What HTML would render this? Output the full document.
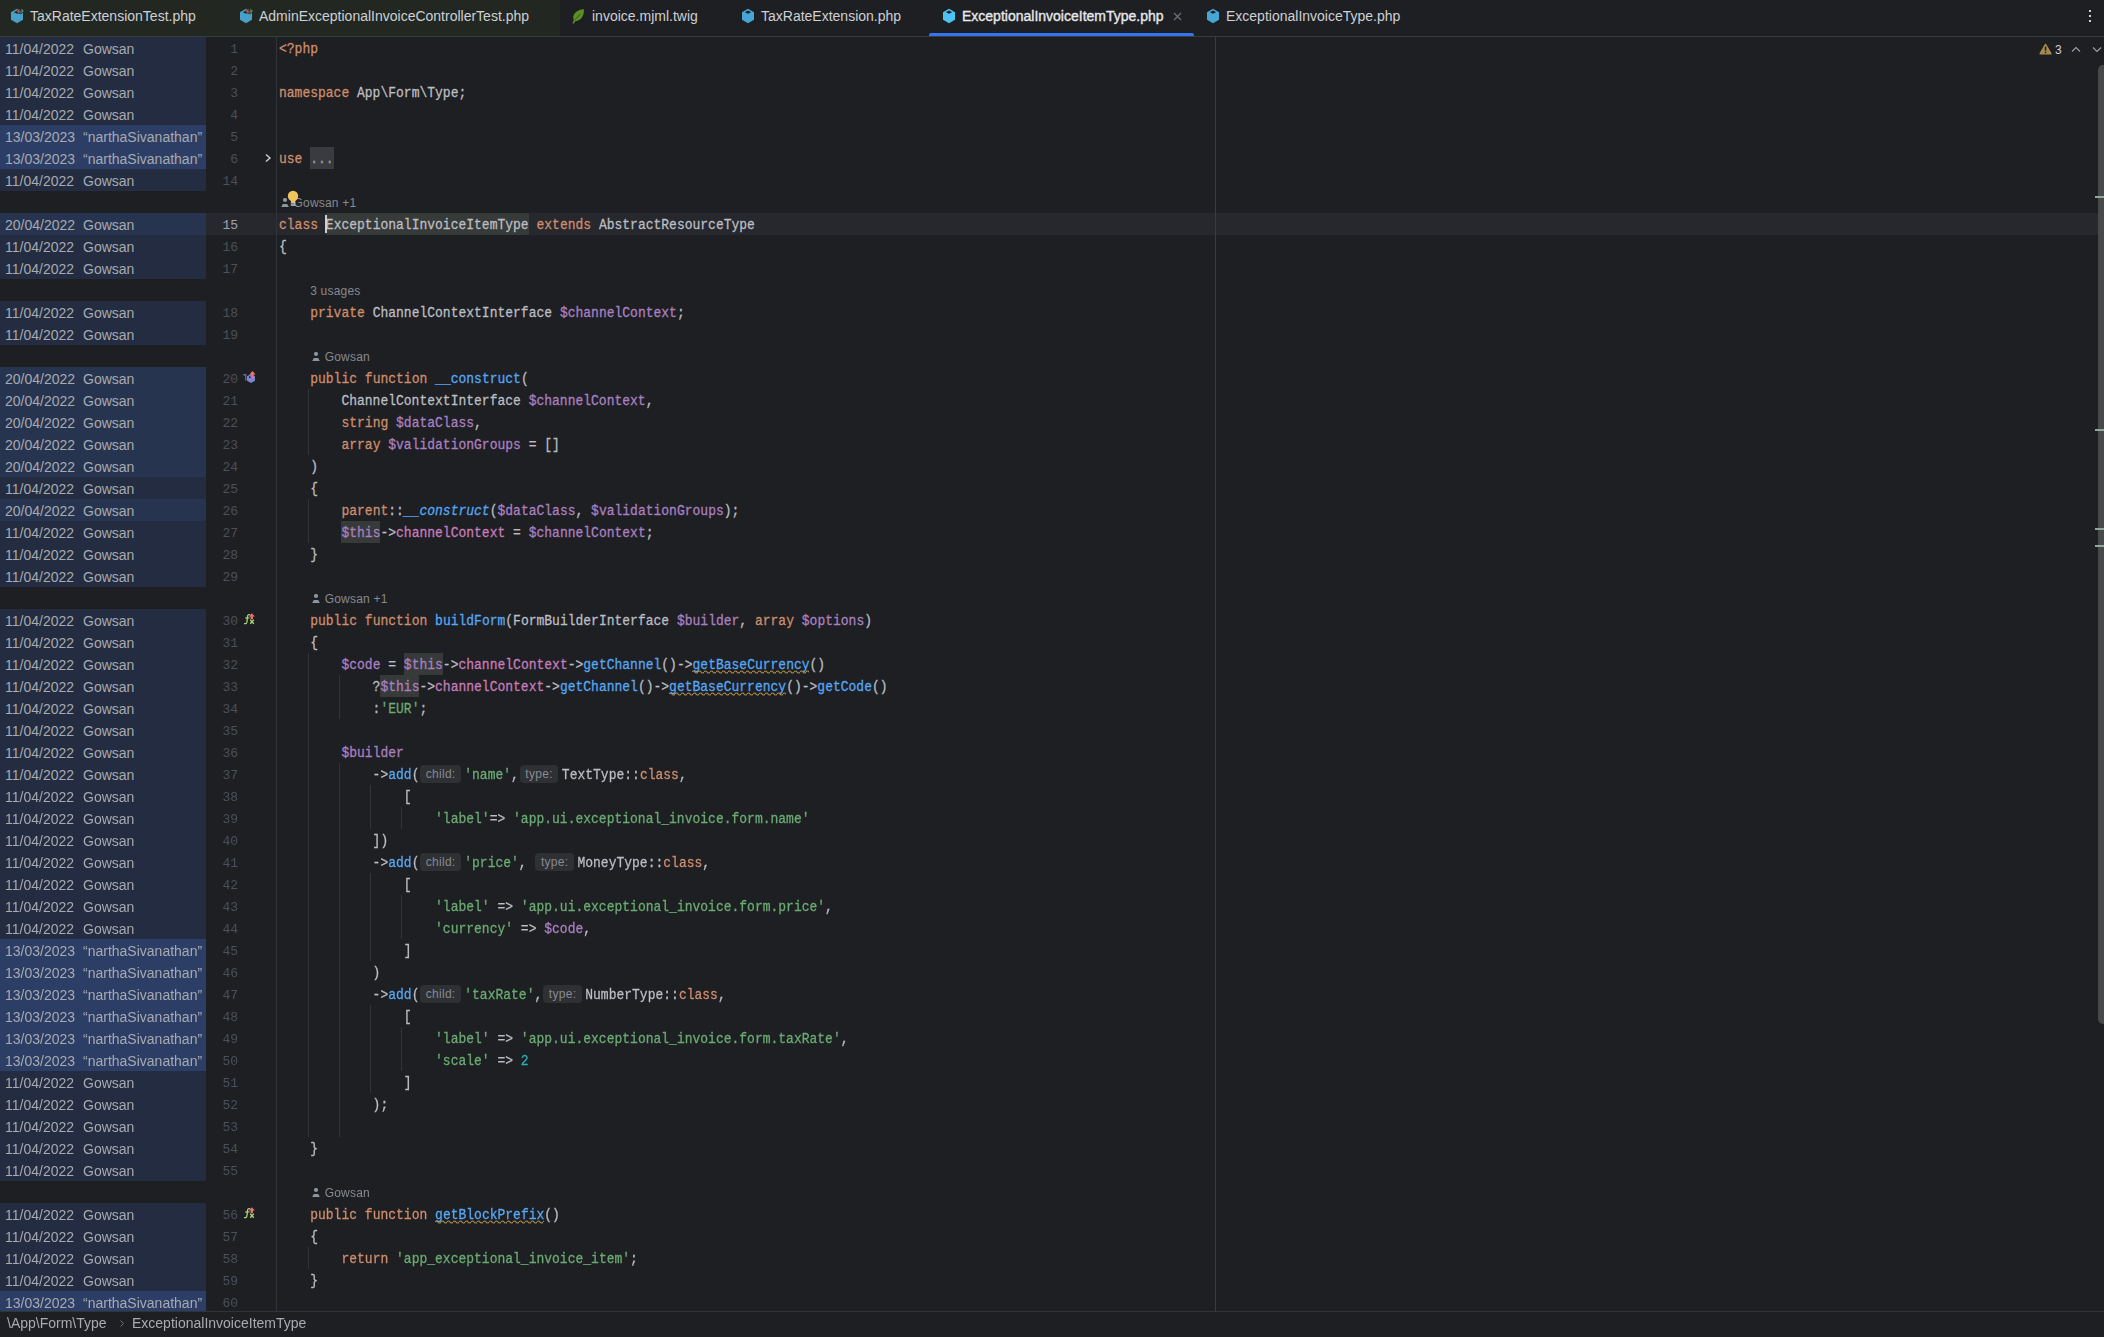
<!DOCTYPE html><html><head><meta charset="utf-8"><style>
*{margin:0;padding:0;box-sizing:border-box}
html,body{width:2104px;height:1337px;overflow:hidden;background:#1e1f22}
body{position:relative;font-family:"Liberation Sans",sans-serif}
.a{position:absolute}
.tabs{position:absolute;left:0;top:0;width:2104px;height:37px;border-bottom:1px solid #393b40;background:#1e1f22}
.tab{position:absolute;top:0;height:36px;line-height:32px;font-size:14px;color:#cdd0d6;white-space:nowrap}
.row{position:absolute;left:0;width:2104px;height:22px}
.bl{position:absolute;left:0;top:0;width:206px;height:22px;font-size:14px;line-height:23px;color:#a7aab0;white-space:nowrap}
.bl .d{position:absolute;left:5px;top:0.5px}
.bl .nm{position:absolute;left:83px;top:0.5px}
.lnum{position:absolute;left:200px;width:38px;top:0;height:22px;text-align:right;font-family:"Liberation Mono",monospace;font-size:13px;line-height:22px;padding-top:2px;color:#4b5059}
.code{position:absolute;left:279px;top:2px;height:22px;transform:scaleY(1.1);transform-origin:0 14px;-webkit-text-stroke:0.25px currentColor;font-family:"Liberation Mono",monospace;font-size:13px;line-height:22px;color:#bcbec4;white-space:pre}
.k{color:#cf8e6d} .v{color:#ab80c2} .fld{color:#c77dbb} .f{color:#56a8f5} .s{color:#6aab73} .n{color:#2aacb8}
.fi{color:#56a8f5;font-style:italic}
.fw{color:#56a8f5}
.uc{}
.vuc{color:#ab80c2}
.fold{color:#9a9da3}
.caretc{display:inline-block;width:2px;height:18px;background:#ced0d6;vertical-align:top;margin-top:0px;margin-left:-1px;margin-right:-1px;position:relative;z-index:2}
.hint{display:inline-block;text-align:center;font-family:"Liberation Sans",sans-serif;font-size:12px;letter-spacing:.3px;line-height:18px;height:18px;padding:0;margin:0 3.5px 0 1px;border-radius:4px;background:#2e3033;color:#868a91;vertical-align:1px;transform:translateY(0.5px) scaleY(0.91);-webkit-text-stroke:0}
.cv{position:absolute;top:0;height:22px;font-size:12px;letter-spacing:.2px;line-height:24px;color:#868a91;white-space:nowrap}
.guide{position:absolute;width:1px;background:#313438}
</style></head><body>
<div class="tabs"></div>
<div class="a" style="left:0;top:0;width:560px;height:36px;background:#222821"></div>
<svg class="a" style="left:10px;top:8px" width="15" height="16" viewBox="0 0 15 16"><path d="M7 0.8 L13 4.3 L13 11.7 L7 15.2 L1 11.7 L1 4.3 Z" fill="#46a0c9"/><path d="M3.9 4.2 L7 2.6 L10.1 4.2 L7 5.8 Z" fill="#222821"/><path d="M9.6 0 L10.2 6 L6.4 3.7 Z" fill="#d9534f" stroke="#222821" stroke-width="0.7" stroke-linejoin="round"/><path d="M11 0 L14.3 2.9 L11.1 6 Z" fill="#4f9a5a" stroke="#222821" stroke-width="0.7" stroke-linejoin="round"/></svg>
<div class="tab" style="left:30px">TaxRateExtensionTest.php</div>
<svg class="a" style="left:239px;top:8px" width="15" height="16" viewBox="0 0 15 16"><path d="M7 0.8 L13 4.3 L13 11.7 L7 15.2 L1 11.7 L1 4.3 Z" fill="#46a0c9"/><path d="M3.9 4.2 L7 2.6 L10.1 4.2 L7 5.8 Z" fill="#222821"/><path d="M9.6 0 L10.2 6 L6.4 3.7 Z" fill="#d9534f" stroke="#222821" stroke-width="0.7" stroke-linejoin="round"/><path d="M11 0 L14.3 2.9 L11.1 6 Z" fill="#4f9a5a" stroke="#222821" stroke-width="0.7" stroke-linejoin="round"/></svg>
<div class="tab" style="left:259px">AdminExceptionalInvoiceControllerTest.php</div>
<svg class="a" style="left:571px;top:8px" width="14" height="16" viewBox="0 0 14 16"><path d="M12.8 1 C13.6 7.8 9.6 13.2 3.4 13.2 C0.6 9.6 2.4 2.2 12.8 1 Z" fill="#5a8f24"/><path d="M2.4 14.8 L3.6 12.4" stroke="#5a8f24" stroke-width="1.6" stroke-linecap="round"/><path d="M3.8 12 L9.4 5.8" stroke="#2e4422" stroke-width="0.8"/></svg>
<div class="tab" style="left:592px">invoice.mjml.twig</div>
<svg class="a" style="left:741px;top:8px" width="15" height="16" viewBox="0 0 15 16"><path d="M7 0.8 L13 4.3 L13 11.7 L7 15.2 L1 11.7 L1 4.3 Z" fill="#46a7d6"/><path d="M3.9 4.2 L7 2.6 L10.1 4.2 L7 5.8 Z" fill="#1e1f22"/></svg>
<div class="tab" style="left:761px">TaxRateExtension.php</div>
<svg class="a" style="left:942px;top:8px" width="15" height="16" viewBox="0 0 15 16"><path d="M7 0.8 L13 4.3 L13 11.7 L7 15.2 L1 11.7 L1 4.3 Z" fill="#4cc3f5"/><path d="M3.9 4.2 L7 2.6 L10.1 4.2 L7 5.8 Z" fill="#1e1f22"/></svg>
<div class="tab" style="left:962px;color:#e6e8ec;-webkit-text-stroke:0.35px #e6e8ec">ExceptionalInvoiceItemType.php</div>
<svg class="a" style="left:1206px;top:8px" width="15" height="16" viewBox="0 0 15 16"><path d="M7 0.8 L13 4.3 L13 11.7 L7 15.2 L1 11.7 L1 4.3 Z" fill="#46a7d6"/><path d="M3.9 4.2 L7 2.6 L10.1 4.2 L7 5.8 Z" fill="#1e1f22"/></svg>
<div class="tab" style="left:1226px">ExceptionalInvoiceType.php</div>
<svg class="a" style="left:1173px;top:12px" width="9" height="9" viewBox="0 0 9 9"><path d="M1 1L8 8M8 1L1 8" stroke="#6f737a" stroke-width="1.1"/></svg>
<div class="a" style="left:929px;top:33px;width:265px;height:3px;background:#3574f0;border-radius:2px 2px 0 0"></div>
<div class="a" style="left:2089px;top:10px;width:2px;height:2px;background:#ced0d6"></div>
<div class="a" style="left:2089px;top:15px;width:2px;height:2px;background:#ced0d6"></div>
<div class="a" style="left:2089px;top:20px;width:2px;height:2px;background:#ced0d6"></div>
<div class="row" style="top:37px;">
<div class="bl" style="background:#232c40"><span class="d">11/04/2022</span><span class="nm">Gowsan</span></div>
<div class="lnum" style="">1</div>
<div class="code"><span class="k">&lt;?php</span></div>
</div>
<div class="row" style="top:59px;">
<div class="bl" style="background:#232c40"><span class="d">11/04/2022</span><span class="nm">Gowsan</span></div>
<div class="lnum" style="">2</div>
<div class="code"></div>
</div>
<div class="row" style="top:81px;">
<div class="bl" style="background:#232c40"><span class="d">11/04/2022</span><span class="nm">Gowsan</span></div>
<div class="lnum" style="">3</div>
<div class="code"><span class="k">namespace</span> App\Form\Type;</div>
</div>
<div class="row" style="top:103px;">
<div class="bl" style="background:#232c40"><span class="d">11/04/2022</span><span class="nm">Gowsan</span></div>
<div class="lnum" style="">4</div>
<div class="code"></div>
</div>
<div class="row" style="top:125px;">
<div class="bl" style="background:#2c3e65"><span class="d">13/03/2023</span><span class="nm">“narthaSivanathan”</span></div>
<div class="lnum" style="">5</div>
<div class="code"></div>
</div>
<div class="row" style="top:147px;">
<div class="bl" style="background:#2c3e65"><span class="d">13/03/2023</span><span class="nm">“narthaSivanathan”</span></div>
<div class="lnum" style="">6</div>
<div class="a" style="left:310.2px;top:0;width:23.4px;height:22px;background:#393b40"></div>
<div class="code"><span class="k">use</span> <span class="fold">...</span></div>
</div>
<div class="row" style="top:169px;">
<div class="bl" style="background:#232c40"><span class="d">11/04/2022</span><span class="nm">Gowsan</span></div>
<div class="lnum" style="">14</div>
<div class="code"></div>
</div>
<div class="row" style="top:191px">
<svg class="a" style="left:281.0px;top:7px" width="9" height="9" viewBox="0 0 9 9"><circle cx="4" cy="2" r="2.1" fill="#8a96a0"/><path d="M0.2 8.9 L1.8 6 L6.2 6 L7.8 8.9 Z" fill="#8a96a0"/></svg>
<div class="cv" style="left:293.5px">Gowsan +1</div>
</div>
<div class="row" style="top:213px;background:#26282e;">
<div class="bl" style="background:#27344f"><span class="d">20/04/2022</span><span class="nm">Gowsan</span></div>
<div class="lnum" style="color:#a1a3ab">15</div>
<div class="a" style="left:324.8px;top:2px;width:2px;height:18px;background:#ced0d6;z-index:3"></div>
<div class="a" style="left:325.8px;top:0;width:202.8px;height:22px;background:#363a38"></div>
<div class="code"><span class="k">class</span> <span class="uc">ExceptionalInvoiceItemType</span> <span class="k">extends</span> AbstractResourceType</div>
</div>
<div class="row" style="top:235px;">
<div class="bl" style="background:#232c40"><span class="d">11/04/2022</span><span class="nm">Gowsan</span></div>
<div class="lnum" style="">16</div>
<div class="code">{</div>
</div>
<div class="row" style="top:257px;">
<div class="bl" style="background:#232c40"><span class="d">11/04/2022</span><span class="nm">Gowsan</span></div>
<div class="lnum" style="">17</div>
<div class="code"></div>
</div>
<div class="row" style="top:279px">
<div class="cv" style="left:310.2px">3 usages</div>
</div>
<div class="row" style="top:301px;">
<div class="bl" style="background:#232c40"><span class="d">11/04/2022</span><span class="nm">Gowsan</span></div>
<div class="lnum" style="">18</div>
<div class="code">    <span class="k">private</span> ChannelContextInterface <span class="v">$channelContext</span>;</div>
</div>
<div class="row" style="top:323px;">
<div class="bl" style="background:#232c40"><span class="d">11/04/2022</span><span class="nm">Gowsan</span></div>
<div class="lnum" style="">19</div>
<div class="code"></div>
</div>
<div class="row" style="top:345px">
<svg class="a" style="left:312.2px;top:7px" width="9" height="9" viewBox="0 0 9 9"><circle cx="4" cy="2" r="2.1" fill="#8a96a0"/><path d="M0.2 8.9 L1.8 6 L6.2 6 L7.8 8.9 Z" fill="#8a96a0"/></svg>
<div class="cv" style="left:324.7px">Gowsan</div>
</div>
<div class="row" style="top:367px;">
<div class="bl" style="background:#27344f"><span class="d">20/04/2022</span><span class="nm">Gowsan</span></div>
<div class="lnum" style="">20</div>
<div class="code">    <span class="k">public</span> <span class="k">function</span> <span class="f">__construct</span>(</div>
</div>
<div class="row" style="top:389px;">
<div class="bl" style="background:#27344f"><span class="d">20/04/2022</span><span class="nm">Gowsan</span></div>
<div class="lnum" style="">21</div>
<div class="code">        ChannelContextInterface <span class="v">$channelContext</span>,</div>
</div>
<div class="row" style="top:411px;">
<div class="bl" style="background:#27344f"><span class="d">20/04/2022</span><span class="nm">Gowsan</span></div>
<div class="lnum" style="">22</div>
<div class="code">        <span class="k">string</span> <span class="v">$dataClass</span>,</div>
</div>
<div class="row" style="top:433px;">
<div class="bl" style="background:#27344f"><span class="d">20/04/2022</span><span class="nm">Gowsan</span></div>
<div class="lnum" style="">23</div>
<div class="code">        <span class="k">array</span> <span class="v">$validationGroups</span> = []</div>
</div>
<div class="row" style="top:455px;">
<div class="bl" style="background:#27344f"><span class="d">20/04/2022</span><span class="nm">Gowsan</span></div>
<div class="lnum" style="">24</div>
<div class="code">    )</div>
</div>
<div class="row" style="top:477px;">
<div class="bl" style="background:#232c40"><span class="d">11/04/2022</span><span class="nm">Gowsan</span></div>
<div class="lnum" style="">25</div>
<div class="code">    {</div>
</div>
<div class="row" style="top:499px;">
<div class="bl" style="background:#27344f"><span class="d">20/04/2022</span><span class="nm">Gowsan</span></div>
<div class="lnum" style="">26</div>
<div class="code">        <span class="k">parent</span>::<span class="fi">__construct</span>(<span class="v">$dataClass</span>, <span class="v">$validationGroups</span>);</div>
</div>
<div class="row" style="top:521px;">
<div class="bl" style="background:#232c40"><span class="d">11/04/2022</span><span class="nm">Gowsan</span></div>
<div class="lnum" style="">27</div>
<div class="a" style="left:341.4px;top:0;width:39.0px;height:22px;background:#363a38"></div>
<div class="code">        <span class="vuc">$this</span>-&gt;<span class="fld">channelContext</span> = <span class="v">$channelContext</span>;</div>
</div>
<div class="row" style="top:543px;">
<div class="bl" style="background:#232c40"><span class="d">11/04/2022</span><span class="nm">Gowsan</span></div>
<div class="lnum" style="">28</div>
<div class="code">    }</div>
</div>
<div class="row" style="top:565px;">
<div class="bl" style="background:#232c40"><span class="d">11/04/2022</span><span class="nm">Gowsan</span></div>
<div class="lnum" style="">29</div>
<div class="code"></div>
</div>
<div class="row" style="top:587px">
<svg class="a" style="left:312.2px;top:7px" width="9" height="9" viewBox="0 0 9 9"><circle cx="4" cy="2" r="2.1" fill="#8a96a0"/><path d="M0.2 8.9 L1.8 6 L6.2 6 L7.8 8.9 Z" fill="#8a96a0"/></svg>
<div class="cv" style="left:324.7px">Gowsan +1</div>
</div>
<div class="row" style="top:609px;">
<div class="bl" style="background:#232c40"><span class="d">11/04/2022</span><span class="nm">Gowsan</span></div>
<div class="lnum" style="">30</div>
<div class="code">    <span class="k">public</span> <span class="k">function</span> <span class="f">buildForm</span>(FormBuilderInterface <span class="v">$builder</span>, <span class="k">array</span> <span class="v">$options</span>)</div>
</div>
<div class="row" style="top:631px;">
<div class="bl" style="background:#232c40"><span class="d">11/04/2022</span><span class="nm">Gowsan</span></div>
<div class="lnum" style="">31</div>
<div class="code">    {</div>
</div>
<div class="row" style="top:653px;">
<div class="bl" style="background:#232c40"><span class="d">11/04/2022</span><span class="nm">Gowsan</span></div>
<div class="lnum" style="">32</div>
<div class="a" style="left:403.8px;top:0;width:39.0px;height:22px;background:#363a38"></div>
<svg class="a" style="left:692.4px;top:16.9px;z-index:2" width="117.0" height="4" viewBox="0 0 117.0 4"><defs><pattern id="wv1" width="6" height="4" patternUnits="userSpaceOnUse"><path d="M0 2 C0.5 1.0 1 1.0 1.5 1.0 C2 1.0 2.5 1.0 3 2 C3.5 3.0 4 3.0 4.5 3.0 C5 3.0 5.5 3.0 6 2" stroke="#a88a48" stroke-width="1.2" fill="none"/></pattern></defs><rect x="0" y="0" width="117.0" height="4" fill="url(#wv1)"/></svg>
<div class="code">        <span class="v">$code</span> = <span class="vuc">$this</span>-&gt;<span class="fld">channelContext</span>-&gt;<span class="f">getChannel</span>()-&gt;<span class="fw">getBaseCurrency</span>()</div>
</div>
<div class="row" style="top:675px;">
<div class="bl" style="background:#232c40"><span class="d">11/04/2022</span><span class="nm">Gowsan</span></div>
<div class="lnum" style="">33</div>
<div class="a" style="left:380.4px;top:0;width:39.0px;height:22px;background:#363a38"></div>
<svg class="a" style="left:669.0px;top:16.9px;z-index:2" width="117.0" height="4" viewBox="0 0 117.0 4"><defs><pattern id="wv2" width="6" height="4" patternUnits="userSpaceOnUse"><path d="M0 2 C0.5 1.0 1 1.0 1.5 1.0 C2 1.0 2.5 1.0 3 2 C3.5 3.0 4 3.0 4.5 3.0 C5 3.0 5.5 3.0 6 2" stroke="#a88a48" stroke-width="1.2" fill="none"/></pattern></defs><rect x="0" y="0" width="117.0" height="4" fill="url(#wv2)"/></svg>
<div class="code">            ?<span class="vuc">$this</span>-&gt;<span class="fld">channelContext</span>-&gt;<span class="f">getChannel</span>()-&gt;<span class="fw">getBaseCurrency</span>()-&gt;<span class="f">getCode</span>()</div>
</div>
<div class="row" style="top:697px;">
<div class="bl" style="background:#232c40"><span class="d">11/04/2022</span><span class="nm">Gowsan</span></div>
<div class="lnum" style="">34</div>
<div class="code">            :<span class="s">&#x27;EUR&#x27;</span>;</div>
</div>
<div class="row" style="top:719px;">
<div class="bl" style="background:#232c40"><span class="d">11/04/2022</span><span class="nm">Gowsan</span></div>
<div class="lnum" style="">35</div>
<div class="code"></div>
</div>
<div class="row" style="top:741px;">
<div class="bl" style="background:#232c40"><span class="d">11/04/2022</span><span class="nm">Gowsan</span></div>
<div class="lnum" style="">36</div>
<div class="code">        <span class="v">$builder</span></div>
</div>
<div class="row" style="top:763px;">
<div class="bl" style="background:#232c40"><span class="d">11/04/2022</span><span class="nm">Gowsan</span></div>
<div class="lnum" style="">37</div>
<div class="code">            -&gt;<span class="f">add</span>(<span class="hint" style="width:40.3px">child:</span><span class="s">&#x27;name&#x27;</span>,<span class="hint" style="width:38.5px">type:</span>TextType::<span class="k">class</span>,</div>
</div>
<div class="row" style="top:785px;">
<div class="bl" style="background:#232c40"><span class="d">11/04/2022</span><span class="nm">Gowsan</span></div>
<div class="lnum" style="">38</div>
<div class="code">                [</div>
</div>
<div class="row" style="top:807px;">
<div class="bl" style="background:#232c40"><span class="d">11/04/2022</span><span class="nm">Gowsan</span></div>
<div class="lnum" style="">39</div>
<div class="code">                    <span class="s">&#x27;label&#x27;</span>=&gt; <span class="s">&#x27;app.ui.exceptional_invoice.form.name&#x27;</span></div>
</div>
<div class="row" style="top:829px;">
<div class="bl" style="background:#232c40"><span class="d">11/04/2022</span><span class="nm">Gowsan</span></div>
<div class="lnum" style="">40</div>
<div class="code">            ])</div>
</div>
<div class="row" style="top:851px;">
<div class="bl" style="background:#232c40"><span class="d">11/04/2022</span><span class="nm">Gowsan</span></div>
<div class="lnum" style="">41</div>
<div class="code">            -&gt;<span class="f">add</span>(<span class="hint" style="width:40.3px">child:</span><span class="s">&#x27;price&#x27;</span>, <span class="hint" style="width:38.5px">type:</span>MoneyType::<span class="k">class</span>,</div>
</div>
<div class="row" style="top:873px;">
<div class="bl" style="background:#232c40"><span class="d">11/04/2022</span><span class="nm">Gowsan</span></div>
<div class="lnum" style="">42</div>
<div class="code">                [</div>
</div>
<div class="row" style="top:895px;">
<div class="bl" style="background:#232c40"><span class="d">11/04/2022</span><span class="nm">Gowsan</span></div>
<div class="lnum" style="">43</div>
<div class="code">                    <span class="s">&#x27;label&#x27;</span> =&gt; <span class="s">&#x27;app.ui.exceptional_invoice.form.price&#x27;</span>,</div>
</div>
<div class="row" style="top:917px;">
<div class="bl" style="background:#232c40"><span class="d">11/04/2022</span><span class="nm">Gowsan</span></div>
<div class="lnum" style="">44</div>
<div class="code">                    <span class="s">&#x27;currency&#x27;</span> =&gt; <span class="v">$code</span>,</div>
</div>
<div class="row" style="top:939px;">
<div class="bl" style="background:#2c3e65"><span class="d">13/03/2023</span><span class="nm">“narthaSivanathan”</span></div>
<div class="lnum" style="">45</div>
<div class="code">                ]</div>
</div>
<div class="row" style="top:961px;">
<div class="bl" style="background:#2c3e65"><span class="d">13/03/2023</span><span class="nm">“narthaSivanathan”</span></div>
<div class="lnum" style="">46</div>
<div class="code">            )</div>
</div>
<div class="row" style="top:983px;">
<div class="bl" style="background:#2c3e65"><span class="d">13/03/2023</span><span class="nm">“narthaSivanathan”</span></div>
<div class="lnum" style="">47</div>
<div class="code">            -&gt;<span class="f">add</span>(<span class="hint" style="width:40.3px">child:</span><span class="s">&#x27;taxRate&#x27;</span>,<span class="hint" style="width:38.5px">type:</span>NumberType::<span class="k">class</span>,</div>
</div>
<div class="row" style="top:1005px;">
<div class="bl" style="background:#2c3e65"><span class="d">13/03/2023</span><span class="nm">“narthaSivanathan”</span></div>
<div class="lnum" style="">48</div>
<div class="code">                [</div>
</div>
<div class="row" style="top:1027px;">
<div class="bl" style="background:#2c3e65"><span class="d">13/03/2023</span><span class="nm">“narthaSivanathan”</span></div>
<div class="lnum" style="">49</div>
<div class="code">                    <span class="s">&#x27;label&#x27;</span> =&gt; <span class="s">&#x27;app.ui.exceptional_invoice.form.taxRate&#x27;</span>,</div>
</div>
<div class="row" style="top:1049px;">
<div class="bl" style="background:#2c3e65"><span class="d">13/03/2023</span><span class="nm">“narthaSivanathan”</span></div>
<div class="lnum" style="">50</div>
<div class="code">                    <span class="s">&#x27;scale&#x27;</span> =&gt; <span class="n">2</span></div>
</div>
<div class="row" style="top:1071px;">
<div class="bl" style="background:#232c40"><span class="d">11/04/2022</span><span class="nm">Gowsan</span></div>
<div class="lnum" style="">51</div>
<div class="code">                ]</div>
</div>
<div class="row" style="top:1093px;">
<div class="bl" style="background:#232c40"><span class="d">11/04/2022</span><span class="nm">Gowsan</span></div>
<div class="lnum" style="">52</div>
<div class="code">            );</div>
</div>
<div class="row" style="top:1115px;">
<div class="bl" style="background:#232c40"><span class="d">11/04/2022</span><span class="nm">Gowsan</span></div>
<div class="lnum" style="">53</div>
<div class="code"></div>
</div>
<div class="row" style="top:1137px;">
<div class="bl" style="background:#232c40"><span class="d">11/04/2022</span><span class="nm">Gowsan</span></div>
<div class="lnum" style="">54</div>
<div class="code">    }</div>
</div>
<div class="row" style="top:1159px;">
<div class="bl" style="background:#232c40"><span class="d">11/04/2022</span><span class="nm">Gowsan</span></div>
<div class="lnum" style="">55</div>
<div class="code"></div>
</div>
<div class="row" style="top:1181px">
<svg class="a" style="left:312.2px;top:7px" width="9" height="9" viewBox="0 0 9 9"><circle cx="4" cy="2" r="2.1" fill="#8a96a0"/><path d="M0.2 8.9 L1.8 6 L6.2 6 L7.8 8.9 Z" fill="#8a96a0"/></svg>
<div class="cv" style="left:324.7px">Gowsan</div>
</div>
<div class="row" style="top:1203px;">
<div class="bl" style="background:#232c40"><span class="d">11/04/2022</span><span class="nm">Gowsan</span></div>
<div class="lnum" style="">56</div>
<svg class="a" style="left:435.0px;top:16.9px;z-index:2" width="109.2" height="4" viewBox="0 0 109.2 4"><defs><pattern id="wv3" width="6" height="4" patternUnits="userSpaceOnUse"><path d="M0 2 C0.5 1.0 1 1.0 1.5 1.0 C2 1.0 2.5 1.0 3 2 C3.5 3.0 4 3.0 4.5 3.0 C5 3.0 5.5 3.0 6 2" stroke="#a88a48" stroke-width="1.2" fill="none"/></pattern></defs><rect x="0" y="0" width="109.2" height="4" fill="url(#wv3)"/></svg>
<div class="code">    <span class="k">public</span> <span class="k">function</span> <span class="fw">getBlockPrefix</span>()</div>
</div>
<div class="row" style="top:1225px;">
<div class="bl" style="background:#232c40"><span class="d">11/04/2022</span><span class="nm">Gowsan</span></div>
<div class="lnum" style="">57</div>
<div class="code">    {</div>
</div>
<div class="row" style="top:1247px;">
<div class="bl" style="background:#232c40"><span class="d">11/04/2022</span><span class="nm">Gowsan</span></div>
<div class="lnum" style="">58</div>
<div class="code">        <span class="k">return</span> <span class="s">&#x27;app_exceptional_invoice_item&#x27;</span>;</div>
</div>
<div class="row" style="top:1269px;">
<div class="bl" style="background:#232c40"><span class="d">11/04/2022</span><span class="nm">Gowsan</span></div>
<div class="lnum" style="">59</div>
<div class="code">    }</div>
</div>
<div class="row" style="top:1291px;">
<div class="bl" style="background:#2c3e65"><span class="d">13/03/2023</span><span class="nm">“narthaSivanathan”</span></div>
<div class="lnum" style="">60</div>
<div class="code"></div>
</div>
<div class="a" style="left:276px;top:37px;width:1px;height:1274px;background:#313338"></div>
<div class="a" style="left:1215px;top:37px;width:1px;height:1274px;background:#393b40"></div>
<div class="guide" style="left:308px;top:389px;height:66px"></div>
<div class="guide" style="left:308px;top:499px;height:44px"></div>
<div class="guide" style="left:308px;top:653px;height:484px"></div>
<div class="guide" style="left:339px;top:675px;height:44px"></div>
<div class="guide" style="left:339px;top:763px;height:374px"></div>
<div class="guide" style="left:370px;top:785px;height:44px"></div>
<div class="guide" style="left:370px;top:873px;height:88px"></div>
<div class="guide" style="left:370px;top:1005px;height:88px"></div>
<div class="guide" style="left:401px;top:807px;height:22px"></div>
<div class="guide" style="left:401px;top:895px;height:44px"></div>
<div class="guide" style="left:401px;top:1027px;height:44px"></div>
<div class="guide" style="left:308px;top:1247px;height:22px"></div>
<svg class="a" style="left:264px;top:153px" width="8" height="10" viewBox="0 0 8 10"><path d="M2 1.5 L6 5 L2 8.5" stroke="#ced0d6" stroke-width="1.4" fill="none"/></svg>
<svg class="a" style="left:242px;top:371px" width="14" height="12" viewBox="0 0 14 12"><path d="M1 3 L4.5 3 L4.5 9.5 L3 9.5 L3 5 L1.5 4.5 Z" fill="#5a6290"/><path d="M9 3 L13 5.2 L13 9.8 L9 12 L5 9.8 L5 5.2 Z" fill="#7b85d4"/><path d="M10.5 0 L13.6 3.4 L11.6 3.4 L11.6 6.8 L9.4 6.8 L9.4 3.4 L7.4 3.4 Z" fill="#f07373"/><circle cx="7.8" cy="6.2" r="0.9" fill="#1e1f22"/></svg>
<svg class="a" style="left:243px;top:613px" width="13" height="12" viewBox="0 0 13 12"><path d="M1 10.6 C2.8 11 3.8 10.4 4 8.5 L4.6 3.2 C4.8 1.8 5.6 1.4 7 1.6" stroke="#a8d67a" stroke-width="1.3" fill="none"/><path d="M2.2 5 L6.4 5" stroke="#a8d67a" stroke-width="1.2"/><path d="M7.2 6.8 L10.8 10.8 M10.8 6.8 L7.2 10.8" stroke="#a8d67a" stroke-width="1.3"/><path d="M8.8 0.2 L11.9 3.4 L10 3.4 L10 6.2 L7.6 6.2 L7.6 3.4 L5.7 3.4 Z" fill="#e57373"/></svg>
<svg class="a" style="left:243px;top:1207px" width="13" height="12" viewBox="0 0 13 12"><path d="M1 10.6 C2.8 11 3.8 10.4 4 8.5 L4.6 3.2 C4.8 1.8 5.6 1.4 7 1.6" stroke="#a8d67a" stroke-width="1.3" fill="none"/><path d="M2.2 5 L6.4 5" stroke="#a8d67a" stroke-width="1.2"/><path d="M7.2 6.8 L10.8 10.8 M10.8 6.8 L7.2 10.8" stroke="#a8d67a" stroke-width="1.3"/><path d="M8.8 0.2 L11.9 3.4 L10 3.4 L10 6.2 L7.6 6.2 L7.6 3.4 L5.7 3.4 Z" fill="#e57373"/></svg>
<svg class="a" style="left:286px;top:190px" width="14" height="18" viewBox="0 0 14 18"><circle cx="7" cy="6" r="5.2" fill="#f2c55c"/><rect x="5" y="9" width="4" height="3" fill="#f2c55c"/><rect x="4.8" y="12.2" width="4.5" height="1.3" fill="#dfe1e5"/><rect x="4.8" y="14.4" width="4.5" height="1.3" fill="#dfe1e5"/></svg>
<div class="a" style="left:0;top:1311px;width:2104px;height:26px;border-top:1px solid #303337;background:#1e1f22"></div>
<div class="a" style="left:7px;top:1311px;height:24px;line-height:24px;font-size:14px;color:#a9abb1;white-space:nowrap">\App\Form\Type</div>
<svg class="a" style="left:119px;top:1319px" width="6" height="9" viewBox="0 0 6 9"><path d="M1.5 1.5 L4.5 4.5 L1.5 7.5" stroke="#6f737a" stroke-width="1" fill="none"/></svg>
<div class="a" style="left:132px;top:1311px;height:24px;line-height:24px;font-size:14px;color:#a9abb1;white-space:nowrap">ExceptionalInvoiceItemType</div>
<div class="a" style="left:2098px;top:65px;width:10px;height:959px;border-radius:5px;background:#48494b"></div>
<div class="a" style="left:2095px;top:196px;width:9px;height:2px;background:#8fa89a"></div>
<div class="a" style="left:2095px;top:429px;width:9px;height:2px;background:#8fa89a"></div>
<div class="a" style="left:2095px;top:528px;width:9px;height:2px;background:#8fa89a"></div>
<div class="a" style="left:2095px;top:545px;width:9px;height:2px;background:#8fa89a"></div>
<svg class="a" style="left:2039px;top:43px" width="13" height="12" viewBox="0 0 13 12"><path d="M6.5 1.6 L11.7 10.6 L1.3 10.6 Z" fill="#a58a4f" stroke="#a58a4f" stroke-width="1.8" stroke-linejoin="round"/><rect x="5.8" y="3.6" width="1.5" height="4.2" rx="0.5" fill="#1e1f22"/><rect x="5.8" y="8.6" width="1.5" height="1.5" fill="#1e1f22"/></svg>
<div class="a" style="left:2055px;top:42px;font-size:12px;line-height:16px;color:#ced0d6">3</div>
<svg class="a" style="left:2071px;top:46px" width="10" height="7" viewBox="0 0 10 7"><path d="M1 5.5 L5 1.5 L9 5.5" stroke="#9da0a8" stroke-width="1.1" fill="none"/></svg>
<svg class="a" style="left:2092px;top:46px" width="10" height="7" viewBox="0 0 10 7"><path d="M1 1.5 L5 5.5 L9 1.5" stroke="#9da0a8" stroke-width="1.1" fill="none"/></svg>
</body></html>
